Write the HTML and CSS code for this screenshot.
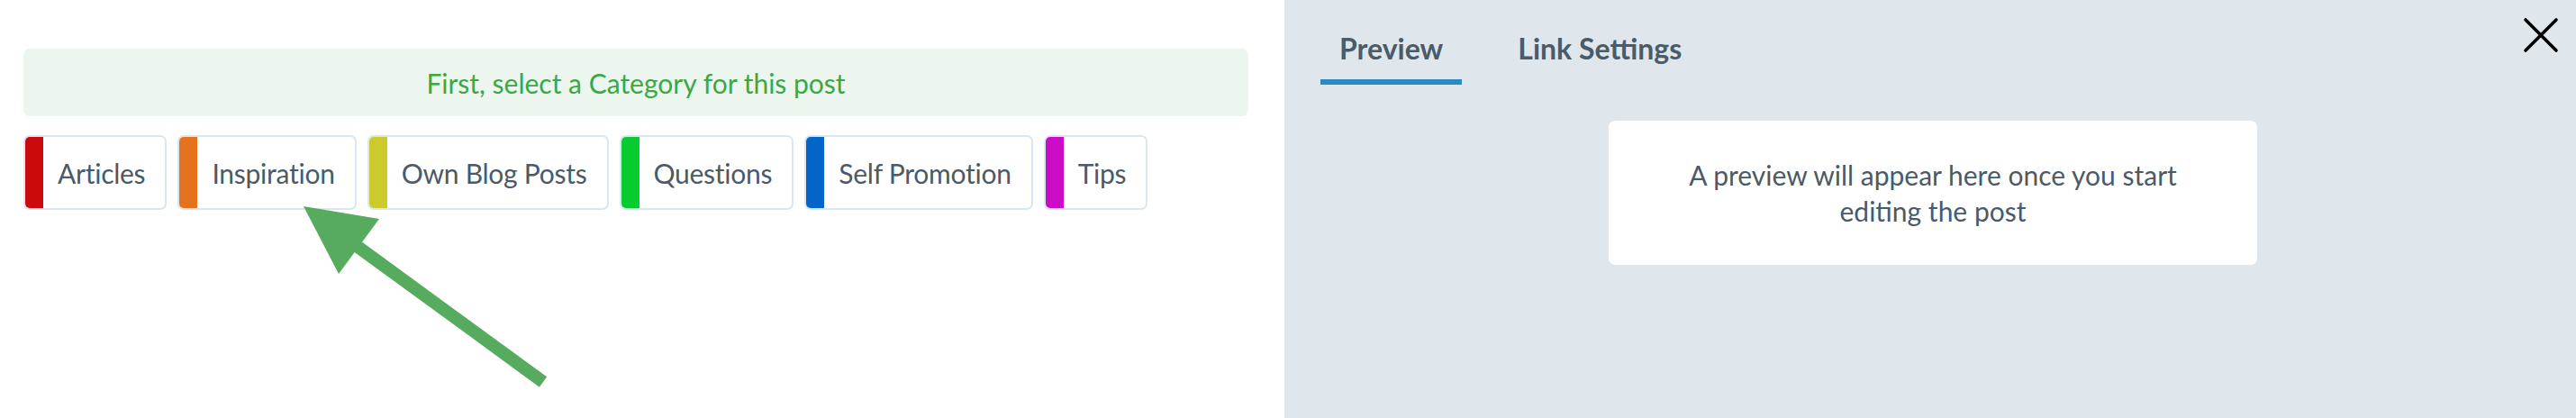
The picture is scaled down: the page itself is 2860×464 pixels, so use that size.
FILE: index.html
```html
<!DOCTYPE html>
<html lang="en">
<head>
<meta charset="utf-8">
<title>Post editor</title>
<link rel="stylesheet" href="styles.css">
</head>
<body>
<div class="app">
  <section class="editor">
    <div class="notice">First, select a Category for this post</div>
    <div class="chips">
      <button class="chip"><span class="bar bar-red"></span><span class="label">Articles</span></button>
      <button class="chip"><span class="bar bar-orange"></span><span class="label">Inspiration</span></button>
      <button class="chip"><span class="bar bar-yellow"></span><span class="label">Own Blog Posts</span></button>
      <button class="chip"><span class="bar bar-green"></span><span class="label">Questions</span></button>
      <button class="chip"><span class="bar bar-blue"></span><span class="label">Self Promotion</span></button>
      <button class="chip"><span class="bar bar-magenta"></span><span class="label">Tips</span></button>
    </div>
    <svg class="pointer" width="1426" height="464" viewBox="0 0 1426 464" aria-hidden="true">
      <line x1="396" y1="273" x2="603" y2="424" stroke="#57ab5e" stroke-width="14"/>
      <polygon points="337,229 421,243 376,304" fill="#57ab5e"/>
    </svg>
  </section>
  <aside class="sidebar">
    <div class="sidebar-head">
      <nav class="tabs">
        <a class="tab active">Preview</a>
        <a class="tab">Link Settings</a>
      </nav>
      <button class="close" aria-label="Close">
        <svg width="40" height="40" viewBox="0 0 40 40"><path d="M3 3 L37 37 M37 3 L3 37" stroke="#000" stroke-width="3.6" stroke-linecap="round" fill="none"/></svg>
      </button>
    </div>
    <div class="preview-box">A preview will appear here once you start editing the post</div>
  </aside>
</div>
</body>
</html>
```

FILE: styles.css
```css
* { box-sizing: border-box; }
html, body { margin: 0; padding: 0; }
body {
  width: 2860px;
  height: 464px;
  overflow: hidden;
  font-family: "Lato", "Noto Sans", sans-serif;
  font-size: 30px;
  line-height: 40px;
  color: #4a5a68;
  background: #fff;
}
.app {
  display: flex;
  height: 464px;
}
.editor {
  position: relative;
  width: 1426px;
  flex: none;
  padding: 54px 40px 0 26px;
  background: #fff;
}
.notice {
  height: 75px;
  padding: 18px 0 17px;
  border-radius: 7px;
  background: #ecf6ee;
  color: #3aa845;
  text-align: center;
}
.chips {
  display: flex;
  gap: 12px;
  margin-top: 21px;
}
.chip {
  display: flex;
  align-items: stretch;
  height: 83px;
  padding: 0 22px 0 0;
  border: 2px solid #d7e7f3;
  border-radius: 7px;
  background: #fff;
  font: inherit;
  letter-spacing: -0.25px;
  color: inherit;
  cursor: pointer;
}
.bar {
  width: 20px;
  flex: none;
  border-radius: 5px 0 0 5px;
}
.label {
  align-self: center;
  padding-left: 16px;
}
.bar-red { background: #cc0a0e; }
.bar-orange { background: #e5731d; }
.bar-yellow { background: #cdca2e; }
.bar-green { background: #06cc30; }
.bar-blue { background: #0465c8; }
.bar-magenta { background: #cc0bc6; }
.pointer {
  position: absolute;
  left: 0;
  top: 0;
  pointer-events: none;
}
.sidebar {
  flex: 1;
  padding: 0 34px 0 40px;
  background: #dfe7ed;
}
.sidebar-head {
  display: flex;
  align-items: flex-start;
}
.tabs {
  display: flex;
  gap: 41px;
}
.tab {
  display: block;
  padding: 34px 21px 14px;
  border-bottom: 6px solid transparent;
  font-size: 32px;
  font-weight: 700;
  color: #4a5b6a;
}
.tab.active {
  border-bottom-color: #2a8ac4;
}
.close {
  margin: 19px -15px 0 auto;
  padding: 0;
  border: 0;
  background: none;
  width: 40px;
  height: 40px;
  cursor: pointer;
}
.close svg { display: block; }
.preview-box {
  width: 720px;
  margin: 40px auto 0;
  padding: 40px 60px;
  border-radius: 7px;
  background: #fff;
  text-align: center;
  color: #4a5a68;
}
```
